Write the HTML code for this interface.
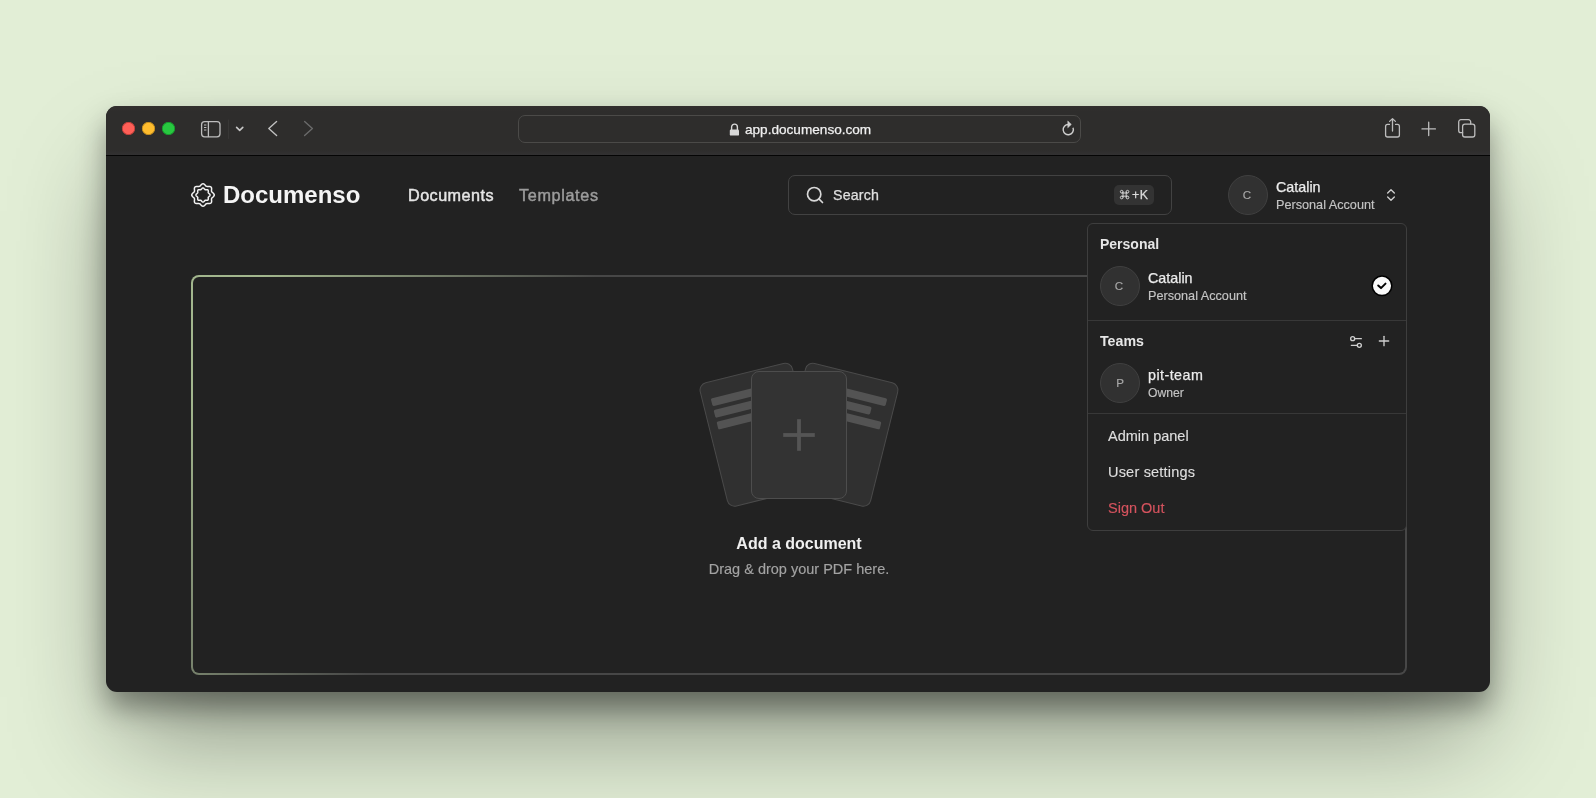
<!DOCTYPE html>
<html><head><meta charset="utf-8">
<style>
*{box-sizing:border-box;margin:0;padding:0}
html,body{width:1596px;height:798px;overflow:hidden}
body{background:#e2eed6;font-family:"Liberation Sans",sans-serif;position:relative}
.a{position:absolute}
.t{position:absolute;white-space:nowrap;line-height:1;will-change:transform}
svg{position:absolute;overflow:visible}
#win{position:absolute;left:106px;top:106px;width:1384px;height:586px;border-radius:11px;background:#222;overflow:hidden;
 box-shadow:0 16px 28px rgba(0,0,0,.36),0 55px 100px -15px rgba(0,0,0,.4)}
#tb{position:absolute;left:0;top:0;width:1384px;height:50px;background:linear-gradient(#322f2e 0px,#2e2d2c 6px,#2e2d2c 44px,#323132 49px);border-bottom:1px solid #050505}
.dot{position:absolute;width:13px;height:13px;border-radius:50%;top:16px}
.av{position:absolute;width:40px;height:40px;border-radius:50%;background:#313131;border:1.6px solid #404040}
.div{position:absolute;height:1px;background:#383838}
</style></head>
<body>
<div id="win">
  <div id="tb">
    <div class="dot" style="left:16px;background:#fe5f57;box-shadow:inset 0 0 0 .7px #b83a35"></div>
    <div class="dot" style="left:36.2px;background:#febc2e;box-shadow:inset 0 0 0 .7px #b9851a"></div>
    <div class="dot" style="left:56.2px;background:#28c840;box-shadow:inset 0 0 0 .7px #15922a"></div>
    <div class="a" style="left:412px;top:9px;width:563px;height:28px;border:1px solid #4b4a48;border-radius:7px;background:transparent"></div>
  </div>
</div>

<svg style="left:0;top:0" width="1596" height="200" viewBox="0 0 1596 200" fill="none" stroke-linecap="round" stroke-linejoin="round">
  <rect x="201.6" y="121.6" width="18.4" height="15.2" rx="3" stroke="#bdbdbd" stroke-width="1.3"/>
  <line x1="208.4" y1="122" x2="208.4" y2="136.5" stroke="#bdbdbd" stroke-width="1.3"/>
  <line x1="204.4" y1="125" x2="206" y2="125" stroke="#bdbdbd" stroke-width="1"/>
  <line x1="204.4" y1="127.5" x2="206" y2="127.5" stroke="#bdbdbd" stroke-width="1"/>
  <line x1="204.4" y1="130" x2="206" y2="130" stroke="#bdbdbd" stroke-width="1"/>
  <line x1="228.6" y1="120" x2="228.6" y2="138.5" stroke="#3a3938" stroke-width="1"/>
  <path d="M236.6 127.4 L239.7 130.4 L242.8 127.4" stroke="#c8c8c8" stroke-width="1.6"/>
  <path d="M276.6 121.6 L268.8 128.6 L276.6 135.6" stroke="#c0c0c0" stroke-width="1.4"/>
  <path d="M304.6 121.6 L312.4 128.6 L304.6 135.6" stroke="#6a6a6a" stroke-width="1.4"/>
  <path d="M731.6 130 V127 a2.9 2.9 0 0 1 5.8 0 V130" stroke="#d8d8d8" stroke-width="1.4"/>
  <rect x="729.8" y="129.6" width="9.2" height="6" rx="1.2" fill="#d8d8d8"/>
  <g transform="translate(-0.3,-0.9)"><path d="M1068.6 125.4 A5.1 5.1 0 1 0 1073.3 128.6" stroke="#cfcfcf" stroke-width="1.4" fill="none" stroke-linecap="butt"/>
  <path d="M1068.3 122.2 L1071.6 125.3 L1068.3 128.4 Z" fill="#cfcfcf" stroke="#cfcfcf" stroke-width="0.6"/></g>
  <path d="M1389.4 124.4 H1387.6 a2 2 0 0 0 -2 2 V135 a2 2 0 0 0 2 2 H1397.4 a2 2 0 0 0 2 -2 V126.4 a2 2 0 0 0 -2 -2 H1395.6" stroke="#bdbdbd" stroke-width="1.3"/>
  <path d="M1392.5 131 V118.8 M1389.6 121.4 L1392.5 118.6 L1395.4 121.4" stroke="#bdbdbd" stroke-width="1.3"/>
  <path d="M1428.7 122.2 V135.6 M1422 128.9 H1435.4" stroke="#bdbdbd" stroke-width="1.3"/>
  <path d="M1462.6 132.7 H1460.9 a2.2 2.2 0 0 1 -2.2 -2.2 V121.9 a2.2 2.2 0 0 1 2.2 -2.2 H1468.5 a2.2 2.2 0 0 1 2.2 2.2 V124" stroke="#bdbdbd" stroke-width="1.3"/>
  <rect x="1462.6" y="124.1" width="12.2" height="12.9" rx="2.3" stroke="#bdbdbd" stroke-width="1.3"/>
</svg>
<div class="t" style="left:745px;top:123.49px;font-size:13.6px;color:#f0f0f0;-webkit-text-stroke:0.25px currentColor;">app.documenso.com</div>


<svg style="left:191px;top:183px" width="24" height="24" viewBox="0 0 24 24" fill="none" stroke="#f2f2f2" stroke-width="1.5">
  <path d="M12.0 0.7L12.7 0.9L13.4 1.3L14.0 1.9L14.5 2.5L15.0 3.1L15.6 3.4L16.2 3.5L16.9 3.5L17.7 3.4L18.6 3.4L19.4 3.6L20.0 4.0L20.4 4.6L20.6 5.4L20.6 6.3L20.5 7.1L20.5 7.8L20.6 8.4L20.9 9.0L21.5 9.5L22.1 10.0L22.7 10.6L23.1 11.3L23.3 12.0L23.1 12.7L22.7 13.4L22.1 14.0L21.5 14.5L20.9 15.0L20.6 15.6L20.5 16.2L20.5 16.9L20.6 17.7L20.6 18.6L20.4 19.4L20.0 20.0L19.4 20.4L18.6 20.6L17.7 20.6L16.9 20.5L16.2 20.5L15.6 20.6L15.0 20.9L14.5 21.5L14.0 22.1L13.4 22.7L12.7 23.1L12.0 23.3L11.3 23.1L10.6 22.7L10.0 22.1L9.5 21.5L9.0 20.9L8.4 20.6L7.8 20.5L7.1 20.5L6.3 20.6L5.4 20.6L4.6 20.4L4.0 20.0L3.6 19.4L3.4 18.6L3.4 17.7L3.5 16.9L3.5 16.2L3.4 15.6L3.1 15.0L2.5 14.5L1.9 14.0L1.3 13.4L0.9 12.7L0.7 12.0L0.9 11.3L1.3 10.6L1.9 10.0L2.5 9.5L3.1 9.0L3.4 8.4L3.5 7.8L3.5 7.1L3.4 6.3L3.4 5.4L3.6 4.6L4.0 4.0L4.6 3.6L5.4 3.4L6.3 3.4L7.1 3.5L7.8 3.5L8.4 3.4L9.0 3.1L9.5 2.5L10.0 1.9L10.6 1.3L11.3 0.9Z"/><path d="M12.0 4.9L12.5 5.1L12.9 5.3L13.2 5.7L13.6 6.1L13.9 6.5L14.2 6.7L14.6 6.8L15.0 6.7L15.6 6.7L16.1 6.7L16.6 6.8L17.0 7.0L17.2 7.4L17.3 7.9L17.3 8.4L17.3 9.0L17.2 9.4L17.3 9.8L17.5 10.1L17.9 10.4L18.3 10.8L18.7 11.1L18.9 11.5L19.1 12.0L18.9 12.5L18.7 12.9L18.3 13.2L17.9 13.6L17.5 13.9L17.3 14.2L17.2 14.6L17.3 15.0L17.3 15.6L17.3 16.1L17.2 16.6L17.0 17.0L16.6 17.2L16.1 17.3L15.6 17.3L15.0 17.3L14.6 17.2L14.2 17.3L13.9 17.5L13.6 17.9L13.2 18.3L12.9 18.7L12.5 18.9L12.0 19.1L11.5 18.9L11.1 18.7L10.8 18.3L10.4 17.9L10.1 17.5L9.8 17.3L9.4 17.2L9.0 17.3L8.4 17.3L7.9 17.3L7.4 17.2L7.0 17.0L6.8 16.6L6.7 16.1L6.7 15.6L6.7 15.0L6.8 14.6L6.7 14.2L6.5 13.9L6.1 13.6L5.7 13.2L5.3 12.9L5.1 12.5L4.9 12.0L5.1 11.5L5.3 11.1L5.7 10.8L6.1 10.4L6.5 10.1L6.7 9.8L6.8 9.4L6.7 9.0L6.7 8.4L6.7 7.9L6.8 7.4L7.0 7.0L7.4 6.8L7.9 6.7L8.4 6.7L9.0 6.7L9.4 6.8L9.8 6.7L10.1 6.5L10.4 6.1L10.8 5.7L11.1 5.3L11.5 5.1Z"/>
</svg>
<div class="t" style="left:223.2px;top:183.28px;font-size:24px;color:#f5f5f5;font-weight:700;">Documenso</div>

<div class="t" style="left:408px;top:187.09px;font-size:16.2px;color:#e6e6e6;letter-spacing:0.45px;-webkit-text-stroke:0.45px currentColor;">Documents</div>

<div class="t" style="left:519px;top:187.09px;font-size:16.2px;color:#9c9c9c;letter-spacing:0.65px;-webkit-text-stroke:0.45px currentColor;">Templates</div>


<div class="a" style="left:788px;top:175px;width:384px;height:40px;border:1px solid #424242;border-radius:7px"></div>
<svg style="left:805px;top:185px" width="20" height="20" viewBox="0 0 24 24" fill="none" stroke="#d8d8d8" stroke-width="2" stroke-linecap="round">
  <circle cx="11" cy="11" r="8"/><path d="m21 21-4.3-4.3"/>
</svg>
<div class="t" style="left:833px;top:187.98px;font-size:14.2px;color:#e0e0e0;letter-spacing:0.2px;-webkit-text-stroke:0.25px currentColor;">Search</div>

<div class="a" style="left:1114px;top:184.8px;width:40.4px;height:20.2px;border-radius:5px;background:#333"></div>
<svg style="left:1120.2px;top:189.9px" width="9.2" height="9.2" viewBox="0 0 9 9" fill="none" stroke="#dcdcdc" stroke-width="0.9">
  <path d="M2.95 1.65V7.35M6.05 1.65V7.35M1.65 2.95H7.35M1.65 6.05H7.35"/><circle cx="1.65" cy="1.65" r="1.3"/><circle cx="7.35" cy="1.65" r="1.3"/><circle cx="1.65" cy="7.35" r="1.3"/><circle cx="7.35" cy="7.35" r="1.3"/>
</svg>
<div class="t" style="left:1131.8px;top:188.60px;font-size:12.4px;color:#dcdcdc;letter-spacing:0.6px;-webkit-text-stroke:0.25px currentColor;">+K</div>


<div class="av" style="left:1228px;top:175px"></div>
<div class="t" style="left:947.4000000000001px;width:600px;text-align:center;top:189.18px;font-size:11.6px;color:#a8a8a8;-webkit-text-stroke:0.15px currentColor;">C</div>

<div class="t" style="left:1275.8px;top:179.50px;font-size:14.3px;color:#ececec;-webkit-text-stroke:0.25px currentColor;">Catalin</div>

<div class="t" style="left:1275.5px;top:199.28px;font-size:12.66px;color:#c4c4c4;-webkit-text-stroke:0.15px currentColor;">Personal Account</div>

<svg style="left:1382.7px;top:187px" width="16" height="16" viewBox="0 0 24 24" fill="none" stroke="#d0d0d0" stroke-width="2" stroke-linecap="round" stroke-linejoin="round">
  <path d="m7 15 5 5 5-5"/><path d="m7 9 5-5 5 5"/>
</svg>

<div id="dz" class="a" style="left:191px;top:275px;width:1216px;height:400px;border-radius:8px;
  background:linear-gradient(120deg,#a2b68d 5%,#474747 28%);"></div>
<div class="a" style="left:193px;top:277px;width:1212px;height:396px;border-radius:6px;background:#222"></div>

<div class="a" style="left:655px;top:371px;width:288px;height:128px">
  <div class="a" style="left:40px;top:-10px;width:96px;height:128px;transform-origin:top right;transform:rotate(-14deg);border:1px solid #4a4a4a;border-radius:8px;background:#303030;padding:16px 8px;">
    <div style="height:8px;width:100%;background:#535353;border-radius:1.5px;margin-bottom:4px"></div>
    <div style="height:8px;width:83.3%;background:#535353;border-radius:1.5px;margin-bottom:4px"></div>
    <div style="height:8px;width:100%;background:#535353;border-radius:1.5px"></div>
  </div>
  <div class="a" style="left:152px;top:-10px;width:96px;height:128px;transform-origin:top left;transform:rotate(14deg);border:1px solid #4a4a4a;border-radius:8px;background:#303030;padding:16px 8px;">
    <div style="height:8px;width:100%;background:#535353;border-radius:1.5px;margin-bottom:4px"></div>
    <div style="height:8px;width:83.3%;background:#535353;border-radius:1.5px;margin-bottom:4px"></div>
    <div style="height:8px;width:100%;background:#535353;border-radius:1.5px"></div>
  </div>
  <div class="a" style="left:96px;top:0;width:96px;height:128px;border:1px solid #4d4d4d;border-radius:8px;background:#333;"></div>
  <svg style="left:120px;top:40px" width="48" height="48" viewBox="0 0 24 24" fill="none" stroke="#555" stroke-width="1.9" stroke-linecap="butt">
    <path d="M4.1 12h15.8"/><path d="M12 4.1v15.8"/>
  </svg>
</div>
<div class="t" style="left:499px;width:600px;text-align:center;top:536.16px;font-size:16px;color:#f0f0f0;font-weight:700;">Add a document</div>

<div class="t" style="left:499px;width:600px;text-align:center;top:561.53px;font-size:14.5px;color:#a3a3a3;-webkit-text-stroke:0.15px currentColor;">Drag &amp; drop your PDF here.</div>


<div class="a" style="left:1087px;top:223px;width:320px;height:308px;border:1px solid #3e3e3e;border-radius:6px;background:#222"></div>
<div class="t" style="left:1100.3px;top:236.95px;font-size:14px;color:#e6e6e6;font-weight:700;">Personal</div>

<div class="av" style="left:1100px;top:266px"></div>
<div class="t" style="left:819.4000000000001px;width:600px;text-align:center;top:280.18px;font-size:11.6px;color:#a8a8a8;-webkit-text-stroke:0.15px currentColor;">C</div>

<div class="t" style="left:1148.3px;top:271.20px;font-size:14.3px;color:#ececec;-webkit-text-stroke:0.25px currentColor;">Catalin</div>

<div class="t" style="left:1148.3px;top:290.08px;font-size:12.66px;color:#c4c4c4;-webkit-text-stroke:0.15px currentColor;">Personal Account</div>

<svg style="left:1371px;top:275px" width="22" height="22" viewBox="0 0 22 22" fill="none">
  <circle cx="11" cy="10.8" r="9.8" fill="#fafafa" stroke="#000" stroke-width="1.5"/>
  <path d="M7.2 10.5 L10 13.1 L14.5 8.6" stroke="#000" stroke-width="2" stroke-linecap="round" stroke-linejoin="round"/>
</svg>
<div class="div" style="left:1088px;top:320px;width:318px"></div>
<div class="t" style="left:1100.4px;top:333.98px;font-size:14.2px;color:#e6e6e6;font-weight:700;">Teams</div>

<svg style="left:1348px;top:333.7px" width="16" height="16" viewBox="0 0 24 24" fill="none" stroke="#d0d0d0" stroke-width="2" stroke-linecap="round">
  <path d="M20 7h-9"/><path d="M14 17H5"/><circle cx="17" cy="17" r="3"/><circle cx="7" cy="7" r="3"/>
</svg>
<svg style="left:1375.9px;top:333.3px" width="16" height="16" viewBox="0 0 24 24" fill="none" stroke="#d0d0d0" stroke-width="2" stroke-linecap="round">
  <path d="M5 12h14"/><path d="M12 5v14"/>
</svg>
<div class="av" style="left:1100px;top:363px"></div>
<div class="t" style="left:819.8px;width:600px;text-align:center;top:377.18px;font-size:11.6px;color:#a8a8a8;-webkit-text-stroke:0.15px currentColor;">P</div>

<div class="t" style="left:1147.9px;top:367.70px;font-size:14.3px;color:#ececec;letter-spacing:0.45px;-webkit-text-stroke:0.25px currentColor;">pit-team</div>

<div class="t" style="left:1148.1px;top:386.67px;font-size:12.2px;color:#c4c4c4;-webkit-text-stroke:0.15px currentColor;">Owner</div>

<div class="div" style="left:1088px;top:413px;width:318px"></div>
<div class="t" style="left:1107.7px;top:428.73px;font-size:14.5px;color:#dedede;-webkit-text-stroke:0.15px currentColor;">Admin panel</div>

<div class="t" style="left:1107.7px;top:464.53px;font-size:14.5px;color:#dedede;-webkit-text-stroke:0.15px currentColor;letter-spacing:0.2px;">User settings</div>

<div class="t" style="left:1107.5px;top:500.73px;font-size:14.5px;color:#d4535e;-webkit-text-stroke:0.15px currentColor;">Sign Out</div>

</body></html>
